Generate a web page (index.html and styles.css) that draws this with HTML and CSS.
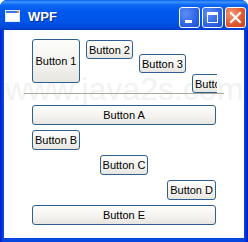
FILE: index.html
```html
<!DOCTYPE html>
<html lang="en">
<head>
    <meta charset="UTF-8">
    <title>WPF</title>
    <link rel="stylesheet" href="styles.css">
</head>
<body>

<div class="window">
    <div class="titlebar">
        <svg class="app-icon" width="15" height="12" viewBox="0 0 15 12">
            <rect x="0.5" y="0.5" width="14" height="11" fill="#fff" stroke="#dfe8f8"/>
            <rect x="1" y="1" width="13" height="2" fill="#3a78e0"/>
            <rect x="12" y="1" width="2" height="2" fill="#f08a2a"/>
        </svg>
        <span class="title">WPF</span>
        <div class="caption-buttons">
            <span class="cap">
                <svg width="21" height="21" viewBox="0 0 21 21"><rect x="6" y="13" width="7" height="3" fill="#fff"/></svg>
            </span>
            <span class="cap">
                <svg width="21" height="21" viewBox="0 0 21 21"><rect x="5.5" y="5.5" width="10" height="10" fill="none" stroke="#fff"/><rect x="5" y="5" width="11" height="3" fill="#fff"/></svg>
            </span>
            <span class="cap close">
                <svg width="21" height="21" viewBox="0 0 21 21"><path d="M6 6 L15 15 M15 6 L6 15" stroke="#fff" stroke-width="2.2" stroke-linecap="square"/></svg>
            </span>
        </div>
    </div>

    <div class="client">
        <div class="watermark">www.java2s.com</div>

        <div class="wrap-row">
            <button class="btn tall">Button 1</button>
            <button class="btn step1">Button 2</button>
            <button class="btn step2">Button 3</button>
            <button class="btn step3">Button 4</button>
        </div>

        <div class="rule"></div>

        <div class="stack">
            <button class="btn">Button A</button>
            <button class="btn to-left">Button B</button>
            <button class="btn to-center">Button C</button>
            <button class="btn to-right">Button D</button>
            <button class="btn">Button E</button>
        </div>
    </div>
</div>

</body>
</html>
```

FILE: styles.css
```css
body {
    margin: 0;
    background: #fff;
}
.window {
    width: 248px;
    height: 242px;
    display: flex;
    flex-direction: column;
    background: linear-gradient(to right, #0019cf, #0747e0 3px, #0747e0 244px, #0019cf);
    border-radius: 7px 7px 0 0;
    overflow: hidden;
}
.titlebar {
    height: 30px;
    display: flex;
    align-items: center;
    padding: 0 2px 0 5px;
    background: linear-gradient(to bottom, #0a5ef0 0, #3d95ff 2px, #0a66f4 5px, #0058ee 12px, #0055e8 22px, #0046d6 28px, #003ac8 30px);
}
.app-icon {
    flex: none;
    margin-top: 2px;
}
.title {
    font-family: "Liberation Sans", Arial, sans-serif;
    font-weight: bold;
    font-size: 13px;
    color: #fff;
    margin-left: 8px;
    margin-top: 2px;
    text-shadow: 1px 1px 0 #0a2a8a;
}
.caption-buttons {
    margin-left: auto;
    display: flex;
    gap: 2px;
    margin-top: 5px;
}
.cap {
    width: 21px;
    height: 21px;
    box-sizing: border-box;
    border: 1px solid #fff;
    border-radius: 3px;
    background: radial-gradient(circle at 30% 30%, #5d8ff6, #2e64e4 60%, #1f4fd0);
    display: flex;
    align-items: center;
    justify-content: center;
}
.cap svg {
    flex: none;
}
.cap.close {
    background: radial-gradient(circle at 30% 30%, #f29a78, #e05a32 55%, #c83f18);
}
.client {
    position: relative;
    z-index: 0;
    height: 208px;
    margin: 0 4px;
    background: #fff;
    overflow: hidden;
}
.watermark {
    position: absolute;
    z-index: -1;
    left: 1px;
    top: 41px;
    font-family: "Liberation Sans", Arial, sans-serif;
    font-size: 32px;
    line-height: 36px;
    color: #f2f2f2;
    white-space: nowrap;
}
.btn {
    font-family: "Liberation Sans", Arial, sans-serif;
    font-size: 11px;
    color: #000;
    height: 20px;
    padding: 0 2px;
    margin: 0;
    border: 1px solid #2f5f8e;
    border-radius: 3px;
    background: linear-gradient(to bottom, #fdfdfb, #f3f2ee 60%, #e6e5df);
    box-sizing: border-box;
    white-space: nowrap;
    flex: none;
}
.wrap-row {
    display: flex;
    align-items: flex-start;
    gap: 6px;
    width: 185px;
    height: 54px;
    margin: 9px 0 0 28px;
    overflow: hidden;
}
.tall {
    width: 48px;
    height: 44px;
}
.step1 {
    margin-top: 1px;
    height: 19px;
}
.step2 {
    margin-top: 15px;
    height: 19px;
}
.step3 {
    margin-top: 35px;
    height: 19px;
}
.rule {
    height: 1px;
    margin: 0 20px;
    background: #aca899;
}
.stack {
    display: flex;
    flex-direction: column;
    gap: 5px;
    margin: 11px 28px 0;
}
.to-left {
    align-self: flex-start;
}
.to-center {
    align-self: center;
}
.to-right {
    align-self: flex-end;
}
```
